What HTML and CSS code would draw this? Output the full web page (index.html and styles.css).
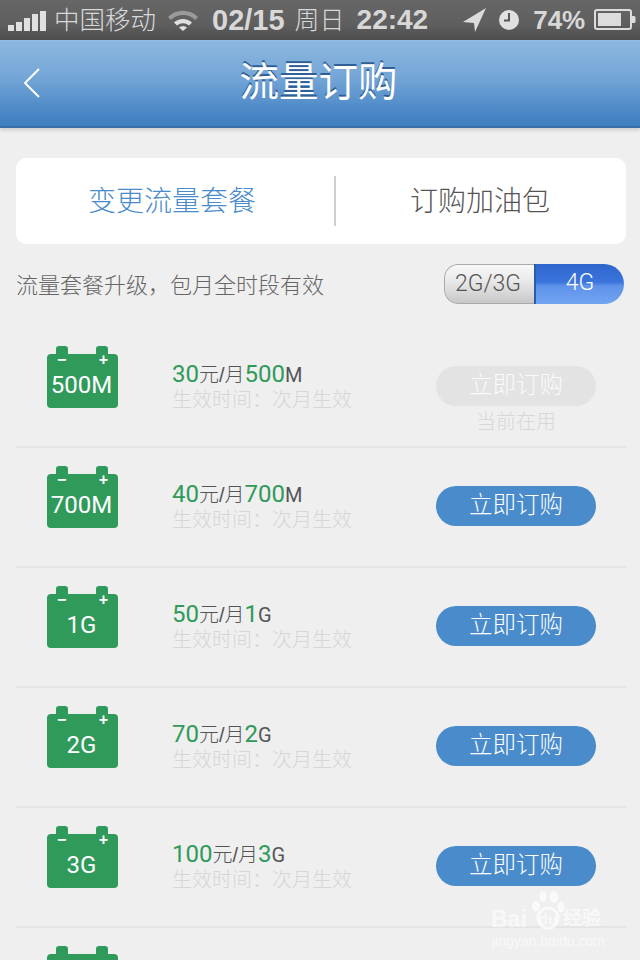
FILE: index.html
```html
<!DOCTYPE html>
<html lang="zh-CN">
<head>
<meta charset="utf-8">
<title>流量订购</title>
<link rel="stylesheet" href="styles.css">
</head>
<body>
<div class="page">
  <div class="status">
    <div class="signal"><i class="b1"></i><i class="b2"></i><i class="b3"></i><i class="b4"></i><i class="b5"></i></div>
    <span class="carrier">中国移动</span>
    <svg class="wifi" width="32" height="22" viewBox="0 0 32 22"><path d="M1 8 A21 21 0 0 1 31 8 L28 11 A17 17 0 0 0 4 11 Z" fill="#9a9a9a"/><path d="M7 13.5 A13 13 0 0 1 25 13.5 L22 16.5 A9 9 0 0 0 10 16.5 Z" fill="#e0e0e0"/><path d="M12 18.5 A6 6 0 0 1 20 18.5 L16 22 Z" fill="#e0e0e0"/></svg>
    <span class="time date">02/15</span>
    <span class="zhou">周日</span>
    <span class="time clock">22:42</span>
    <svg class="loc" width="24" height="24" viewBox="0 0 24 24"><path d="M23 0 L0 14 L11 15 L12 24 Z" fill="#dcdcdc"/></svg>
    <svg class="alarm" width="20" height="20" viewBox="0 0 20 20"><circle cx="10" cy="10" r="10" fill="#e0e0e0"/><path d="M10 3 V10.5 H5" fill="none" stroke="#555" stroke-width="2"/></svg>
    <span class="time pct">74%</span>
    <svg class="batt" width="42" height="22" viewBox="0 0 42 22"><rect x="1" y="1" width="36" height="19" rx="2" fill="none" stroke="#dcdcdc" stroke-width="2"/><rect x="4" y="4" width="23" height="13" fill="#dcdcdc"/><path d="M38 7 h2 a1.500 1.500 0 0 1 1.500 1.500 v4 a1.500 1.500 0 0 1 -1.500 1.500 h-2 z" fill="#dcdcdc"/></svg>
  </div>

  <header class="nav">
    <svg class="back" width="20" height="32" viewBox="0 0 20 32"><path d="M17 2 L3 16 L17 30" fill="none" stroke="#fff" stroke-width="2"/></svg>
    <h1 class="title">流量订购</h1>
  </header>

  <main class="content">
    <div class="tabs">
      <div class="tab tab-active">变更流量套餐</div>
      <div class="tab">订购加油包</div>
    </div>

    <div class="intro">
      <span class="intro-text">流量套餐升级，包月全时段有效</span>
      <div class="seg">
        <div class="seg-item seg-off">2G/3G</div>
        <div class="seg-item seg-on">4G</div>
      </div>
    </div>

    <div class="list">
    <div class="row">
      <div class="batt-icon"><span class="posts"><i></i><i></i></span><div class="batt-body"><span class="signs"><b>−</b><b>+</b></span><span class="batt-label">500M</span></div></div>
      <div class="info"><div class="price"><em>30</em><span>元/月</span><em>500</em><span class="unit">M</span></div><div class="eff">生效时间：次月生效</div></div>
      <div class="action"><div class="btn btn-off">立即订购</div><div class="current">当前在用</div></div>
    </div>
    <div class="row">
      <div class="batt-icon"><span class="posts"><i></i><i></i></span><div class="batt-body"><span class="signs"><b>−</b><b>+</b></span><span class="batt-label">700M</span></div></div>
      <div class="info"><div class="price"><em>40</em><span>元/月</span><em>700</em><span class="unit">M</span></div><div class="eff">生效时间：次月生效</div></div>
      <div class="action"><div class="btn">立即订购</div></div>
    </div>
    <div class="row">
      <div class="batt-icon"><span class="posts"><i></i><i></i></span><div class="batt-body"><span class="signs"><b>−</b><b>+</b></span><span class="batt-label">1G</span></div></div>
      <div class="info"><div class="price"><em>50</em><span>元/月</span><em>1</em><span class="unit">G</span></div><div class="eff">生效时间：次月生效</div></div>
      <div class="action"><div class="btn">立即订购</div></div>
    </div>
    <div class="row">
      <div class="batt-icon"><span class="posts"><i></i><i></i></span><div class="batt-body"><span class="signs"><b>−</b><b>+</b></span><span class="batt-label">2G</span></div></div>
      <div class="info"><div class="price"><em>70</em><span>元/月</span><em>2</em><span class="unit">G</span></div><div class="eff">生效时间：次月生效</div></div>
      <div class="action"><div class="btn">立即订购</div></div>
    </div>
    <div class="row">
      <div class="batt-icon"><span class="posts"><i></i><i></i></span><div class="batt-body"><span class="signs"><b>−</b><b>+</b></span><span class="batt-label">3G</span></div></div>
      <div class="info"><div class="price"><em>100</em><span>元/月</span><em>3</em><span class="unit">G</span></div><div class="eff">生效时间：次月生效</div></div>
      <div class="action"><div class="btn">立即订购</div></div>
    </div>
    <div class="row">
      <div class="batt-icon"><span class="posts"><i></i><i></i></span><div class="batt-body"></div></div>
    </div>
    </div>
  </main>

  <div class="mark">
    <svg class="paw" width="36" height="40" viewBox="0 0 36 40"><g fill="#fff" fill-opacity=".7"><ellipse cx="5" cy="15" rx="4" ry="5.500"/><ellipse cx="12" cy="5.500" rx="3.500" ry="5.500"/><ellipse cx="23" cy="6" rx="4" ry="6"/><ellipse cx="30" cy="16" rx="3.500" ry="5.500"/></g><circle cx="17" cy="27" r="10" fill="none" stroke="#fff" stroke-opacity=".7" stroke-width="3"/></svg>
    <span class="mark-top"><span>Bai</span><span class="mark-du">du</span><span class="mark-cn">经验</span></span>
    <span class="mark-url">jingyan.baidu.com</span>
  </div>
</div>
</body>
</html>
```
FILE: styles.css
```css
* { box-sizing: border-box; }
html, body { margin: 0; padding: 0; }
body {
  width: 640px;
  height: 960px;
  overflow: hidden;
  background: #efefef;
  font-family: "Liberation Sans", "Noto Sans CJK SC", sans-serif;
  font-weight: 300;
}
.page { position: relative; width: 640px; height: 960px; overflow: hidden; }

/* status bar */
.status {
  height: 40px;
  display: flex;
  align-items: center;
  background: linear-gradient(#666 0, #5f5f5f 60%, #4e4e4e 100%);
  color: #dcdcdc;
  padding-left: 8px;
  white-space: nowrap;
}
.signal { display: flex; align-items: flex-end; gap: 2px; width: 38px; height: 22px; flex: none; }
.signal i { display: block; width: 6px; background: #e0e0e0; }
.signal .b1 { height: 6px; }
.signal .b2 { height: 9px; }
.signal .b3 { height: 13px; }
.signal .b4 { height: 17px; }
.signal .b5 { height: 20px; }
.carrier { font-size: 25.500px; line-height: 36px; margin: -1px 0 0 8px; color: #d8d8d8; width: 102px; flex: none; }
.wifi { margin-left: 11px; flex: none; }
.time { font-size: 28px; font-weight: 700; color: #d8d8d8; flex: none; }
.date { margin-left: 13px; font-size: 29px; }
.zhou { font-size: 25px; line-height: 36px; margin: -1px 0 0 10px; width: 50px; color: #d8d8d8; flex: none; }
.clock { margin-left: 12px; }
.loc { margin-left: 35px; flex: none; }
.alarm { margin-left: 12px; flex: none; }
.pct { margin-left: 14px; font-size: 26px; }
.batt { margin-left: 9px; flex: none; }

/* nav */
.nav {
  height: 88px;
  display: flex;
  align-items: center;
  justify-content: center;
  position: relative;
  padding-right: 3px;
  background: linear-gradient(#8cb7e0 0, #76a7d8 40%, #4a87c6 85%, #3f7fc0 100%);
  border-top: 1px solid #92bce3;
  border-bottom: 2px solid #3a6fa8;
  box-shadow: 0 2px 4px rgba(0,0,0,.15);
}
.back { position: absolute; left: 22px; top: 26px; }
.title {
  margin: -1px 0 0;
  font-size: 39.500px;
  line-height: 1;
  font-weight: 400;
  color: #fff;
  text-shadow: 0 -2px 0 #2f5f94;
}

/* content */
.content { padding: 30px 14px 0 16px; }
.tabs {
  height: 86px;
  background: #fff;
  border-radius: 10px;
  display: flex;
  align-items: center;
}
.tab {
  flex: 1 1 0;
  height: 50px;
  display: flex;
  align-items: center;
  justify-content: center;
  font-size: 28px;
  line-height: 36px;
  padding-top: 2px;
  padding-right: 2px;
  color: #555;
}
.tab-active { color: #4a8ccb; border-right: 2px solid #cfcfcf; flex: 0 0 320px; padding-right: 6px; }
.intro {
  display: flex;
  align-items: center;
  justify-content: space-between;
  height: 40px;
  margin-top: 20px;
  margin-right: 2px;
}
.intro-text { font-size: 22px; line-height: 30px; margin-top: 3px; color: #666; }
.seg {
  width: 180px;
  height: 40px;
  display: flex;
  border-radius: 14px 20px 20px 14px;
  overflow: hidden;
  font-family: Roboto, "Liberation Sans", sans-serif;
  font-size: 23px;
  line-height: 38px;
  text-align: center;
}
.seg-item { height: 40px; }
.seg-off {
  width: 90px;
  color: #555;
  padding-right: 3px;
  background: linear-gradient(#f8f8f8, #eaeaea 40%, #c8c8c8);
  border: 1px solid #aaa;
  border-right: 0;
  border-radius: 14px 0 0 14px;
}
.seg-on {
  width: 90px;
  color: #fff;
  background: linear-gradient(#2f66cc 0, #3a74dc 45%, #5f93ea 55%, #72a4f0 100%);
  border-left: 2px solid #2a5cab;
}

/* rows */
.list { margin-top: 24px; }
.row {
  height: 120px;
  display: flex;
  align-items: flex-start;
  border-bottom: 2px solid #e4e4e4;
}
.batt-icon {
  margin-top: 18px;
  margin-left: 31px;
  width: 71px;
  flex: none;
}
.posts { display: flex; justify-content: space-between; padding: 0 10px 0 9px; height: 8px; }
.posts i { display: block; width: 12px; height: 8px; background: #2f9a5a; border-radius: 3px 3px 0 0; }
.batt-body {
  height: 54px;
  background: #2f9a5a;
  border-radius: 4px;
  color: #fff;
  position: relative;
  display: flex;
  align-items: center;
  justify-content: center;
  padding-right: 2px;
}
.signs { position: absolute; top: -3px; left: 10px; right: 10px; display: flex; justify-content: space-between; font-size: 16px; line-height: 18px; }
.signs b { font-weight: 700; }
.batt-label { font-family: Roboto, "Liberation Sans", sans-serif; font-weight: 400; font-size: 24px; line-height: 1; margin-top: 8px; }
.info { margin-left: 54px; width: 264px; flex: none; margin-top: 31px; }
.price { font-size: 20px; line-height: 30px; height: 30px; color: #555; white-space: nowrap; }
.price em { font-family: Roboto, "Liberation Sans", sans-serif; font-weight: 400; font-style: normal; font-size: 24px; color: #2f9a5a; }
.price span { font-size: 20px; }
.price .unit { font-family: Roboto, "Liberation Sans", sans-serif; font-weight: 400; }
.eff { font-size: 20px; line-height: 22px; color: #d6d6d6; white-space: nowrap; }
.action { margin-top: 38px; width: 160px; flex: none; text-align: center; }
.btn {
  height: 40px;
  border-radius: 20px;
  background: #4a8ccb;
  color: #fff;
  font-size: 23.500px;
  line-height: 38px;
  text-align: center;
}
.btn-off { background: #e3e3e3; color: #fafafa; }
.current { font-size: 20px; line-height: 24px; margin-top: 4px; color: #d8d8d8; }

/* watermark */
.mark { position: absolute; left: 490px; top: 890px; width: 130px; height: 64px; color: rgba(255,255,255,.6); }
.paw { position: absolute; left: 41px; top: 1px; }
.mark-top { position: absolute; left: 1px; top: 16px; display: flex; font-size: 23px; font-weight: 700; line-height: 26px; white-space: nowrap; }
.mark-du { font-size: 15px; margin-left: 12px; margin-right: 6px; }
.mark-cn { font-size: 19px; }
.mark-url { position: absolute; left: 2px; top: 43px; font-size: 14px; line-height: 16px; white-space: nowrap; }
```
